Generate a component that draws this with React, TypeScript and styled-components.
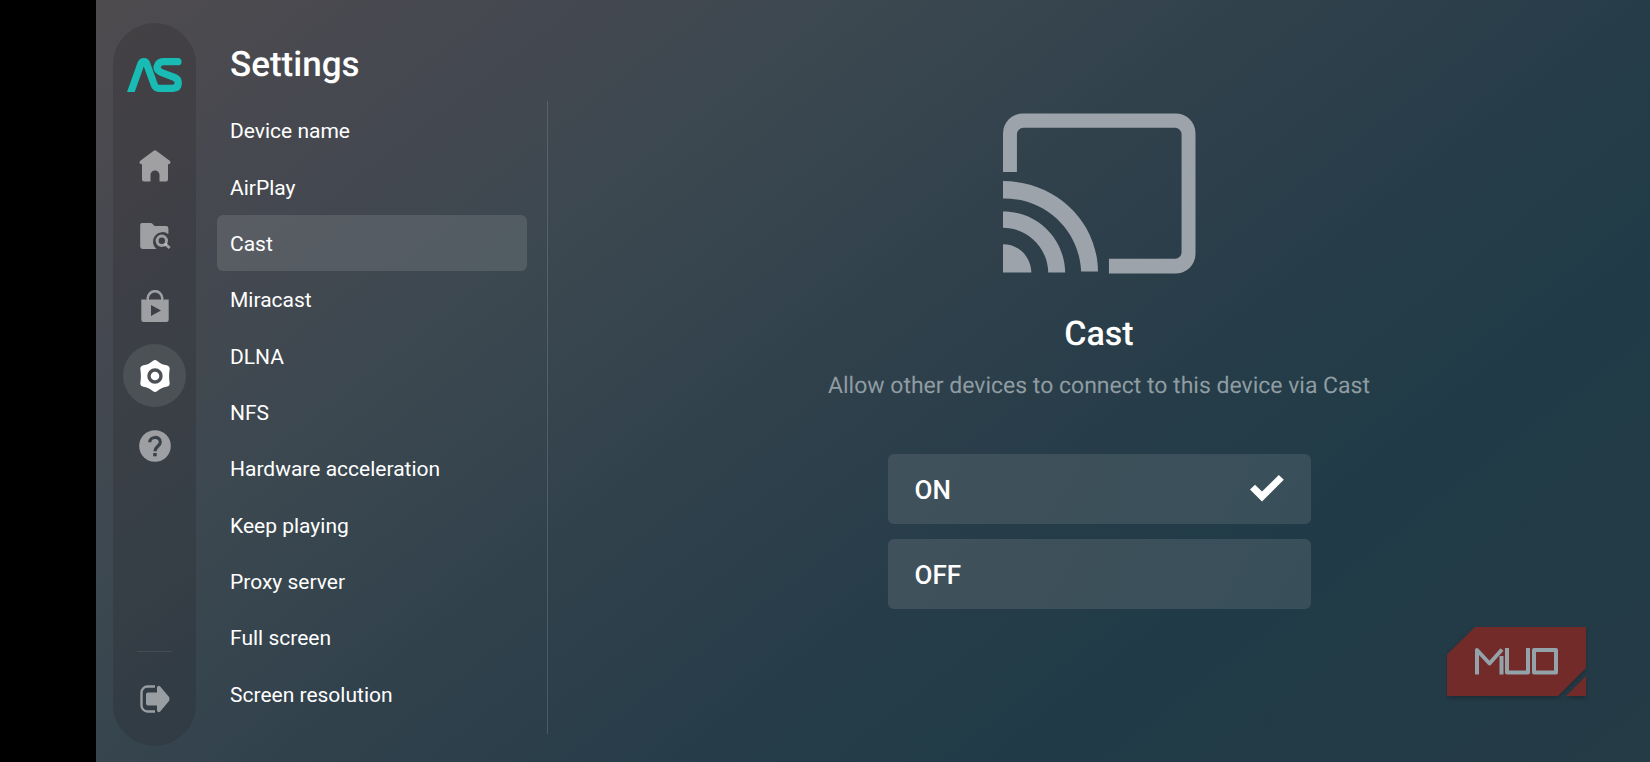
import React, { useState } from "react";
import styled, { createGlobalStyle } from "styled-components";

const GlobalStyle = createGlobalStyle`
  * { box-sizing: border-box; }
  html, body, #root { height: 100%; }
  body {
    margin: 0;
    background: #000;
    color: #fff;
    font-family: Roboto, "Liberation Sans", sans-serif;
    text-rendering: geometricPrecision;
  }
  button { font: inherit; color: inherit; border: 0; background: none; padding: 0; cursor: pointer; }
`;

const Screen = styled.div`
  display: flex;
  min-height: 100%;
  margin-left: 96px;
  background: linear-gradient(142deg, #4e4b4e 0%, #454850 17%, #3c4850 30%, #2f404b 49%, #263d49 62%, #203b47 75%, #253b46 100%);
`;

const Rail = styled.nav`
  display: flex;
  flex-direction: column;
  align-items: center;
  flex: none;
  width: 83px;
  margin: 23px 21px 16px 17px;
  padding: 35px 0 9px;
  border-radius: 42px;
  background: rgba(36, 34, 36, 0.22);
`;

const Logo = styled.svg`
  width: 55px;
  height: 34px;
  margin-bottom: 42px;
`;

const RailButton = styled.button<{ $active?: boolean }>`
  display: grid;
  place-items: center;
  width: 63px;
  height: 63px;
  margin-bottom: 7px;
  border-radius: 50%;
  color: ${(p) => (p.$active ? "#fff" : "rgba(255, 255, 255, 0.5)")};
  background: ${(p) => (p.$active ? "#4b5155" : "transparent")};
  svg { width: 32px; height: 32px; }
`;

const RailEnd = styled.div`
  display: flex;
  flex-direction: column;
  align-items: center;
  width: 35px;
  margin-top: auto;
  border-top: 1px solid rgba(255, 255, 255, 0.08);
  padding-top: 15px;
`;

const Menu = styled.section`
  display: flex;
  flex-direction: column;
  flex: none;
  width: 310px;
  padding: 44px 0 40px;
`;

const Heading = styled.h1`
  margin: 0 0 16px;
  padding-left: 13px;
  font-size: 35px;
  font-weight: 500;
  line-height: 42px;
`;

const MenuList = styled.ul`
  display: grid;
  grid-auto-rows: 1fr;
  flex: 1;
  margin: 0;
  padding: 0;
  list-style: none;
`;

const MenuItem = styled.button<{ $active: boolean }>`
  width: 100%;
  height: 100%;
  min-height: 44px;
  padding: 2px 13px 0;
  border-radius: 6px;
  text-align: left;
  font-size: 21px;
  line-height: 26px;
  background: ${(p) => (p.$active ? "rgba(255, 255, 255, 0.11)" : "transparent")};
`;

const Detail = styled.main`
  display: flex;
  flex-direction: column;
  align-items: center;
  flex: 1;
  margin: 101px 0 28px 20px;
  padding-top: 12px;
  border-left: 1px solid rgba(255, 255, 255, 0.14);
`;

const CastArt = styled.svg`
  width: 193px;
  height: 161px;
  color: #9ca3aa;
`;

const Title = styled.h2`
  margin: 40px 0 0;
  font-size: 34px;
  font-weight: 500;
  line-height: 40px;
`;

const Description = styled.p`
  margin: 18px 0 54px;
  font-size: 23px;
  line-height: 28px;
  color: #8f9ca2;
`;

const Options = styled.div`
  display: flex;
  flex-direction: column;
  gap: 15px;
  width: 423px;
  max-width: 100%;
`;

const Option = styled.button`
  display: flex;
  align-items: center;
  justify-content: space-between;
  height: 70px;
  padding: 2px 27px 0;
  border-radius: 6px;
  font-size: 26px;
  font-weight: 500;
  background: linear-gradient(120deg, #40515b, #384f59);
  svg { width: 34px; height: 27px; margin-bottom: 4px; }
`;

const Badge = styled.svg`
  position: absolute;
  right: 58px;
  bottom: 60px;
  width: 146px;
  height: 76px;
`;

const BadgePlate = styled.g`
  fill: #732b2a;
  filter: drop-shadow(0 2px 2px rgba(20, 30, 36, 0.5));
`;

const HomeIcon = () => (
  <svg viewBox="0 0 32 32" fill="currentColor" aria-hidden="true">
    <path d="M14.4.9a2.6 2.6 0 0 1 3.2 0L30.700 10.800Q31.800 12 31.300 13.300 30.800 14.200 29 14.200V29.600a2 2 0 0 1-2 2H20.500V25a4.500 4.500 0 0 0-9 0v6.600H5a2 2 0 0 1-2-2V14.200Q1.200 14.200.7 13.300.2 12 1.300 10.800z" />
  </svg>
);

const FolderSearchIcon = () => (
  <svg viewBox="0 0 32 32" fill="none" aria-hidden="true">
    <path fill="currentColor" d="M3 3h8.500q1.500 0 2.400 1.200L15.600 6H27q2.400 0 2.400 2.400V14.200A9.400 9.400 0 0 0 17.500 29H3.500Q1.200 29 1.200 26.600V5Q1.200 3 3 3z" />
    <circle cx="22.800" cy="20.800" r="4.700" stroke="currentColor" strokeWidth="3" />
    <path d="m26.200 24 4.500 4" stroke="currentColor" strokeWidth="3" />
  </svg>
);

const StoreIcon = () => (
  <svg viewBox="0 0 32 32" fill="none" aria-hidden="true">
    <path d="M8.700 11V8.500a7.300 7.300 0 0 1 14.600 0V11" stroke="currentColor" strokeWidth="2.600" />
    <path fill="currentColor" fillRule="evenodd" d="M2.300 9.500H6.700Q8 12.500 10.600 9.500H21.400Q24 12.500 25.300 9.500H29.700V29.500a2.500 2.500 0 0 1-2.500 2.500H4.800a2.500 2.500 0 0 1-2.500-2.500zM12 15v11l10-5.500z" />
  </svg>
);

const SettingsIcon = () => (
  <svg viewBox="0 0 32 32" aria-hidden="true">
    <path fill="currentColor" d="M14 .8q2-1.600 4 0 4.500 4 9.500 4.500 3.200.5 3.200 3.500-1.200 7.200 0 14.400 0 3-3.200 3.500-5 .5-9.500 4.500-2 1.600-4 0-4.500-4-9.500-4.500-3.200-.5-3.200-3.500 1.200-7.200 0-14.400 0-3 3.200-3.500 5-.5 9.500-4.500z" />
    <circle cx="16" cy="16" r="6" fill="none" stroke="#4b5155" strokeWidth="3.400" />
  </svg>
);

const HelpIcon = () => (
  <svg viewBox="0 0 32 32" aria-hidden="true">
    <circle cx="16" cy="16" r="15.800" fill="currentColor" />
    <path d="M10.800 12.300c0-6.400 10.500-6.400 10.500-.2 0 4.200-5.300 4.300-5.300 9.200" fill="none" stroke="#3a4148" strokeWidth="3.200" />
    <path d="M14.200 23h3.500v3.300h-3.500z" fill="#3a4148" />
  </svg>
);

const ExitIcon = () => (
  <svg viewBox="0 0 32 32" aria-hidden="true">
    <path d="M16 3.500H8.500A6 6 0 0 0 2.500 9.500v13A6 6 0 0 0 8.500 28.500H16" fill="none" stroke="currentColor" strokeWidth="2.400" />
    <path fill="currentColor" d="M9 9.500H18V4.500q.6-2.500 3-1.200L30 14q1.200 2 0 4L21 28.700q-2.400 1.300-3-1.200V22.500H9Q7 22.500 7 20.500v-9Q7 9.500 9 9.500z" />
  </svg>
);

const CheckIcon = () => (
  <svg viewBox="0 0 34 27" fill="currentColor" aria-hidden="true">
    <path d="M0 14.500 5 9.700 12 16.500 28.800 0 33.800 4.700 12 26.500z" />
  </svg>
);

const items = ["Device name", "AirPlay", "Cast", "Miracast", "DLNA", "NFS", "Hardware acceleration", "Keep playing", "Proxy server", "Full screen", "Screen resolution"];

const railItems = [
  { label: "Home", Icon: HomeIcon },
  { label: "Browse files", Icon: FolderSearchIcon },
  { label: "Store", Icon: StoreIcon },
  { label: "Settings", Icon: SettingsIcon },
  { label: "Help", Icon: HelpIcon },
];

export default function App() {
  const [selected, setSelected] = useState("Cast");
  const [enabled, setEnabled] = useState(true);

  return (
    <>
      <GlobalStyle />
      <Screen>
        <Rail aria-label="Main">
          <Logo viewBox="0 0 166 103" role="img" aria-label="AS">
            <path
              d="M6 118 41 20Q44 11 51 11T60 20L83 83Q87 92 96 92H138Q155 92 155 76 155 64 143 59L104 44Q89 37 91 26 95 11 110 11H154"
              fill="none"
              stroke="#18bcb4"
              strokeWidth="22"
              strokeLinecap="round"
            />
          </Logo>
          {railItems.map(({ label, Icon }) => (
            <RailButton key={label} $active={label === "Settings"} aria-label={label}>
              <Icon />
            </RailButton>
          ))}
          <RailEnd>
            <RailButton aria-label="Exit">
              <ExitIcon />
            </RailButton>
          </RailEnd>
        </Rail>

        <Menu>
          <Heading>Settings</Heading>
          <MenuList>
            {items.map((item) => (
              <li key={item}>
                <MenuItem $active={item === selected} onClick={() => setSelected(item)}>
                  {item}
                </MenuItem>
              </li>
            ))}
          </MenuList>
        </Menu>

        <Detail>
          <CastArt viewBox="0 0 194 161" fill="currentColor" aria-hidden="true">
            <path d="M0 59V20A20 20 0 0 1 20 0H173A20 20 0 0 1 193.500 20V141A20 20 0 0 1 173 161H106.500V146H173A6.500 6.500 0 0 0 179.500 139.500V21A6.500 6.500 0 0 0 173 14.500H20.500A6.500 6.500 0 0 0 14 21V59z" />
            <path d="M0 68C53 68 95 108 95.500 159H78.500C77 118 43 85 0 85.500z" />
            <path d="M0 98.500C35 98.500 62 126 62.500 160H45.500C45 135 25 115 0 115z" />
            <path d="M0 131.500C16 131.500 28 144 28.500 160H0z" />
          </CastArt>
          <Title>Cast</Title>
          <Description>Allow other devices to connect to this device via Cast</Description>
          <Options>
            <Option aria-pressed={enabled} onClick={() => setEnabled(true)}>
              ON
              {enabled && <CheckIcon />}
            </Option>
            <Option aria-pressed={!enabled} onClick={() => setEnabled(false)}>
              OFF
              {!enabled && <CheckIcon />}
            </Option>
          </Options>
        </Detail>
      </Screen>
      <Badge viewBox="0 0 146 76" role="img" aria-label="MUO">
        <BadgePlate>
          <path d="M1 28.500 29 1H140V42L112 70H1z" />
          <path d="M140 50V70H120z" />
        </BadgePlate>
        <g fill="none" stroke="#94a2aa" strokeWidth="4" strokeLinejoin="round">
          <path d="M31 48.500V24L43.500 37.500 56 23.500" />
          <path d="M55.500 30V48.500" />
          <path d="M61 22V46.500H82V22" />
          <path d="M88 24H110V46.500H88z" />
        </g>
      </Badge>
    </>
  );
}
